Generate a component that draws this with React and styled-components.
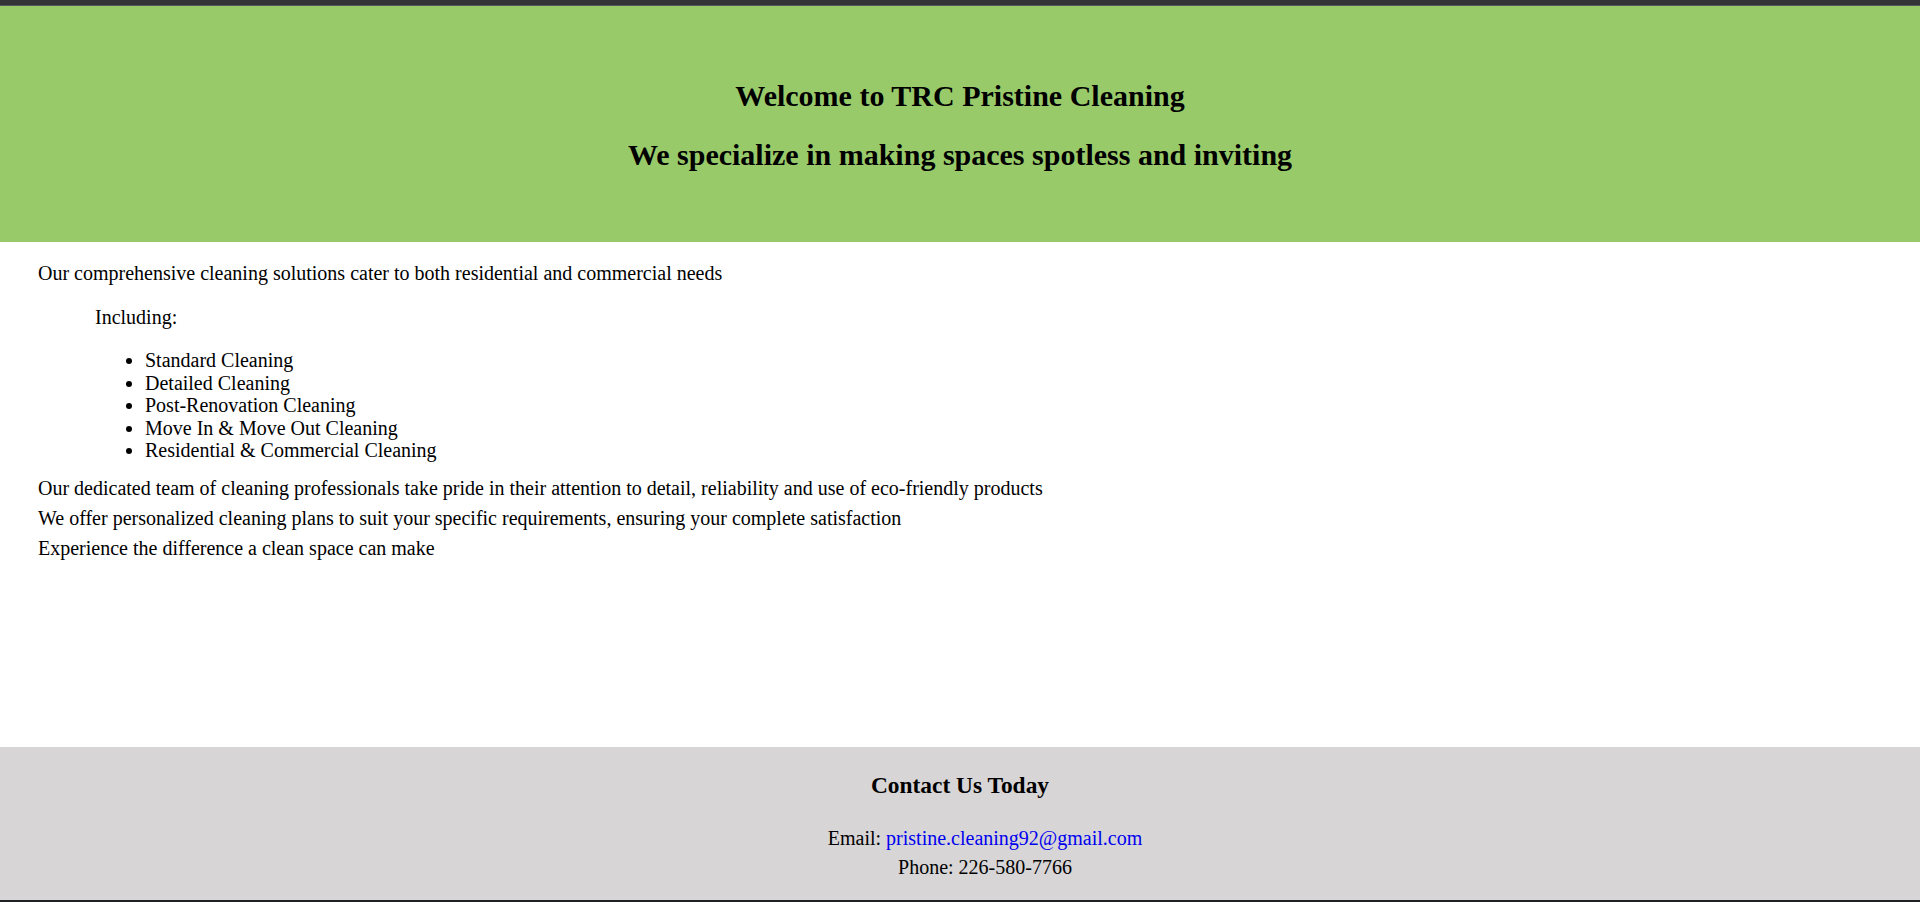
import styled, { createGlobalStyle } from 'styled-components'

const GlobalStyle = createGlobalStyle`
  html, body {
    margin: 0;
    padding: 0;
  }
  body {
    font-family: "Liberation Serif", "Times New Roman", serif;
    font-size: 20px;
    color: #000;
    background: #fff;
  }
`

const Page = styled.div`
  display: flex;
  flex-direction: column;
  min-height: 100vh;
`

const TopBar = styled.div`
  height: 5px;
  background-color: #333438;
  border-bottom: 1px solid #56575b;
`

const Header = styled.header`
  background-color: #99ca6a;
  padding: 48px 0 45px;
  text-align: center;
`

const Title = styled.h2`
  font-size: 30px;
  font-weight: bold;
  line-height: 34px;
  margin: 25px 0;
`

const Main = styled.main`
  flex: 1;
  padding: 20px 38px 0;
`

const Text = styled.p`
  margin: 0;
  line-height: ${(p) => p.lh || 23}px;
`

const Indented = styled.div`
  padding-left: 57px;
  margin-top: 21px;
`

const Services = styled.ul`
  margin: 20px 0 11px;
  padding-left: 50px;
  line-height: 22.6px;
`

const Footer = styled.footer`
  background-color: #d7d5d6;
  padding: 1px 0 18px;
  text-align: center;
`

const ContactTitle = styled.h3`
  font-size: 23.4px;
  font-weight: bold;
  line-height: 27px;
  margin: 24px 0 25px;
`

const ContactList = styled.ul`
  list-style: none;
  margin: 0;
  padding-left: 50px;
  line-height: 29px;
`

const Link = styled.a`
  color: #0000ee;
  text-decoration: none;
`

const BottomBar = styled.div`
  height: 2px;
  background-color: #202124;
`

const services = [
  'Standard Cleaning',
  'Detailed Cleaning',
  'Post-Renovation Cleaning',
  'Move In & Move Out Cleaning',
  'Residential & Commercial Cleaning',
]

function App() {
  return (
    <>
      <GlobalStyle />
      <Page>
        <TopBar />
        <Header>
          <Title>Welcome to TRC Pristine Cleaning</Title>
          <Title>We specialize in making spaces spotless and inviting</Title>
        </Header>
        <Main>
          <Text>Our comprehensive cleaning solutions cater to both residential and commercial needs</Text>
          <Indented>
            <Text>Including:</Text>
            <Services>
              {services.map((s) => (
                <li key={s}>{s}</li>
              ))}
            </Services>
          </Indented>
          <Text lh={30}>Our dedicated team of cleaning professionals take pride in their attention to detail, reliability and use of eco-friendly products</Text>
          <Text lh={30}>We offer personalized cleaning plans to suit your specific requirements, ensuring your complete satisfaction</Text>
          <Text lh={30}>Experience the difference a clean space can make</Text>
        </Main>
        <Footer>
          <ContactTitle>Contact Us Today</ContactTitle>
          <ContactList>
            <li>Email: <Link href="mailto:pristine.cleaning92@gmail.com">pristine.cleaning92@gmail.com</Link></li>
            <li>Phone: 226-580-7766</li>
          </ContactList>
        </Footer>
        <BottomBar />
      </Page>
    </>
  )
}

export default App
